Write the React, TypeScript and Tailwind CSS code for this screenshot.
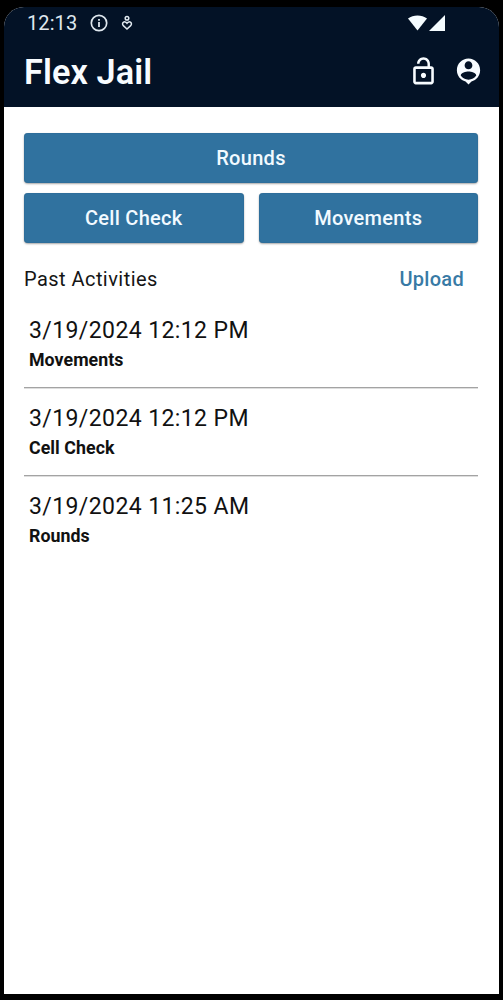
const activities = [
  { time: '3/19/2024 12:12 PM', type: 'Movements' },
  { time: '3/19/2024 12:12 PM', type: 'Cell Check' },
  { time: '3/19/2024 11:25 AM', type: 'Rounds' },
];

function StatusBar() {
  return (
    <div className="flex h-[31px] items-center pl-[23px] pr-[54px] text-[#dfe7ee]">
      <span className="w-[63px] whitespace-nowrap pt-[1px] text-[20px] leading-[31px] tracking-[0.1px]">12:13</span>
      <svg className="h-[18px] w-[18px]" viewBox="0 0 18 18" fill="none" stroke="currentColor">
        <circle cx="9" cy="9" r="7.7" strokeWidth="1.7" />
        <path d="M9 8v5M9 5v1.8" strokeWidth="1.8" />
      </svg>
      <svg className="ml-[13px] h-[16px] w-[12px]" viewBox="0 0 12 16" fill="none" stroke="currentColor" strokeWidth="1.5">
        <circle cx="6" cy="3.2" r="1.8" />
        <path d="M6 8.2C4.8 6.7 3.4 6.5 2.3 7.4C1.2 8.4 1.4 9.8 2.3 10.6L6 14L9.7 10.6C10.6 9.8 10.8 8.4 9.7 7.4C8.6 6.5 7.2 6.7 6 8.2Z" />
      </svg>
      <div className="ml-auto flex items-center gap-[2px] text-[#f5fcff]">
        <svg className="h-[16px] w-[19px]" viewBox="0 0 19 16" fill="currentColor">
          <path d="M0 3.6C5.2-.5 13.8-.5 19 3.6L9.5 15.5Z" />
        </svg>
        <svg className="h-[16px] w-[16px]" viewBox="0 0 16 16" fill="currentColor">
          <path d="M0 16L16 0V16Z" />
        </svg>
      </div>
    </div>
  );
}

function LockOpenIcon() {
  return (
    <svg className="h-[31px] w-[31px]" viewBox="0 0 24 24" fill="currentColor">
      <path d="M12 17c1.1 0 2-.9 2-2s-.9-2-2-2-2 .9-2 2 .9 2 2 2zm6-9h-1V6c0-2.76-2.24-5-5-5S7 3.24 7 6h1.9c0-1.71 1.39-3.1 3.1-3.1s3.1 1.39 3.1 3.1v2H6c-1.1 0-2 .9-2 2v10c0 1.1.9 2 2 2h12c1.1 0 2-.9 2-2V10c0-1.1-.9-2-2-2zm0 12H6V10h12v10z" />
    </svg>
  );
}

function ProfileIcon() {
  return (
    <svg className="h-[31px] w-[31px]" viewBox="0 0 24 24" fill="currentColor">
      <path d="M12 2C7.03 2 3 6.03 3 11C3 15.17 5.84 18.67 9.69 19.69L12 22L14.31 19.69C18.16 18.67 21 15.17 21 11C21 6.03 16.97 2 12 2ZM12 4C13.66 4 15 5.34 15 7.3C15 8.96 13.66 10.3 12 10.3C10.34 10.3 9 8.96 9 7.3C9 5.34 10.34 4 12 4ZM12 18.3C9.5 18.3 7.29 17.02 6 15.08C6.03 13.09 10 12 12 12C13.99 12 17.97 13.09 18 15.08C16.71 17.02 14.5 18.3 12 18.3Z" fillRule="evenodd" />
    </svg>
  );
}

function ActionButton({ label }: { label: string }) {
  return (
    <button className="h-[50px] w-full whitespace-nowrap rounded-[4px] bg-[#30729f] text-[20px] font-medium tracking-[0.3px] text-[#f2faff] shadow-[inset_0_0_1px_#1e557c,0_1px_2px_rgba(0,0,0,0.35)]">
      {label}
    </button>
  );
}

export default function App() {
  return (
    <div className="h-[1000px] w-[503px] overflow-hidden bg-black pl-[4px] pr-[4.5px] pt-[7px] font-[Roboto,sans-serif]">
      <div className="flex h-[986.5px] flex-col overflow-hidden rounded-t-[20px] bg-white">
        <header className="h-[100px] shrink-0 bg-[#031226]">
          <StatusBar />
          <div className="flex h-[67px] items-center pl-[20px] pr-[14.5px] text-[#f8fcff]">
            <h1 className="whitespace-nowrap pt-[1px] text-[34.3px] font-semibold leading-[67px] tracking-[0.1px]">Flex Jail</h1>
            <div className="ml-auto flex gap-[14.5px]">
              <LockOpenIcon />
              <ProfileIcon />
            </div>
          </div>
        </header>
        <main className="flex flex-col pl-[20px] pr-[20.5px] pt-[26px]">
          <ActionButton label="Rounds" />
          <div className="mt-[10px] grid grid-cols-2 gap-[15px]">
            <ActionButton label="Cell Check" />
            <ActionButton label="Movements" />
          </div>
          <div className="flex h-[57px] items-center justify-between pr-[14px] pt-[15px] text-[20px]">
            <h2 className="whitespace-nowrap tracking-[0.45px] text-[#151515]">Past Activities</h2>
            <button className="whitespace-nowrap font-medium tracking-[0.3px] text-[#387aa5]">Upload</button>
          </div>
          <ul>
            {activities.map((a, i) => (
              <li
                key={i}
                className="h-[88px] whitespace-nowrap border-b border-[#a3a3a3] pl-[5px] pt-[16px] text-[#111111] shadow-[0_1px_0_#dedede] last:border-b-0 last:shadow-none"
              >
                <div className="text-[23px] leading-[29px] tracking-[0.4px]">{a.time}</div>
                <div className="text-[17.8px] font-bold leading-[30px] tracking-[0.05px]">{a.type}</div>
              </li>
            ))}
          </ul>
        </main>
      </div>
    </div>
  );
}
